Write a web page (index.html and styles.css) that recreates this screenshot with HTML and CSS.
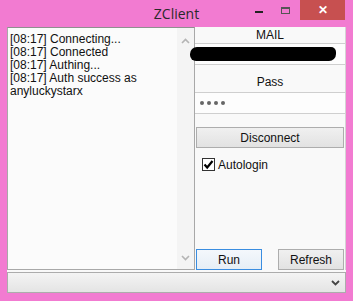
FILE: index.html
```html
<!DOCTYPE html>
<html>
<head>
    <title>ZClient</title>
    <link rel="stylesheet" href="styles.css">
</head>
<body>
    <div class="window">
        <div class="titlebar">
            <span></span>
            <span class="title">ZClient</span>
            <div class="controls">
                <span class="ctl min"><span class="dash"></span></span>
                <span class="ctl max"><span class="square"></span></span>
                <span class="ctl close">&#x2715;</span>
            </div>
        </div>
        <div class="client">
            <div class="main">
                <div class="log">
                    <div class="log-text">
                        [08:17] Connecting...<br>
                        [08:17] Connected<br>
                        [08:17] Authing...<br>
                        [08:17] Auth success as anyluckystarx
                    </div>
                    <div class="scrollbar">
                        <svg width="9" height="6" viewBox="0 0 9 6"><path d="M1 5 L4.5 1.5 L8 5" fill="none" stroke="#b4b4b4" stroke-width="1.6"/></svg>
                        <svg width="9" height="6" viewBox="0 0 9 6"><path d="M1 1 L4.5 4.5 L8 1" fill="none" stroke="#b4b4b4" stroke-width="1.6"/></svg>
                    </div>
                </div>
                <div class="panel">
                    <div class="field-label">MAIL</div>
                    <div class="input"><span class="redact"></span></div>
                    <div class="field-label pass-label">Pass</div>
                    <div class="input pass">
                        <span class="dot"></span><span class="dot"></span><span class="dot"></span><span class="dot"></span>
                    </div>
                    <button class="btn wide">Disconnect</button>
                    <label class="check">
                        <span class="box"><svg width="11" height="11" viewBox="0 0 11 11"><path d="M1.5 5.5 L4.2 8.5 L9.5 2" fill="none" stroke="#000" stroke-width="2.2"/></svg></span>Autologin
                    </label>
                    <div class="actions">
                        <button class="btn run">Run</button>
                        <button class="btn">Refresh</button>
                    </div>
                </div>
            </div>
            <div class="combo">
                <svg width="9" height="6" viewBox="0 0 9 6"><path d="M1 1 L4.5 4.5 L8 1" fill="none" stroke="#444" stroke-width="1.8"/></svg>
            </div>
        </div>
    </div>
</body>
</html>
```

FILE: styles.css
```css
/* Reset */
* {
    margin: 0;
    padding: 0;
    box-sizing: border-box;
}

html, body {
    width: 100%;
    height: 100%;
    overflow: hidden;
    background-color: #f27bd1;
    font-family: 'Liberation Sans', Arial, sans-serif;
    font-size: 12px;
    color: #111;
}

.window {
    width: 353px;
    height: 301px;
    display: flex;
    flex-direction: column;
}

/* Title bar */
.titlebar {
    height: 28px;
    display: grid;
    grid-template-columns: 1fr auto 1fr;
}

.title {
    font-family: 'Open Sans', 'Liberation Sans', sans-serif;
    font-size: 14px;
    color: #2a2a2a;
    padding-top: 4px;
}

.controls {
    display: flex;
    justify-content: flex-end;
    align-items: flex-start;
    padding-right: 8px;
}

.ctl {
    height: 20px;
    display: flex;
    align-items: center;
    justify-content: center;
}

.min {
    width: 26px;
}

.dash {
    width: 8px;
    height: 2px;
    background: #222;
    margin-top: 4px;
}

.max {
    width: 26px;
}

.square {
    width: 9px;
    height: 7px;
    border: 1px solid #555;
    border-top-width: 2px;
}

.close {
    width: 45px;
    margin-left: 2px;
    background: #c75050;
    color: #fff;
    font-size: 12px;
    font-weight: bold;
}

/* Client area */
.client {
    flex: 1;
    margin: 0 7px 8px 7px;
    background: #f9f9f9;
    display: flex;
    flex-direction: column;
}

.main {
    flex: 1;
    display: grid;
    grid-template-columns: 188px 1fr;
}

.log {
    border: 1px solid #a8a8a8;
    border-top-color: #8f8f8f;
    background: #fbfbfb;
    display: flex;
    height: 243px;
}

.log-text {
    flex: 1;
    padding: 5px 2px 0 2px;
    line-height: 13px;
}

.scrollbar {
    width: 17px;
    display: flex;
    flex-direction: column;
    justify-content: space-between;
    align-items: center;
    padding: 10px 0 8px 0;
    background: #f4f4f4;
}

/* Right panel */
.panel {
    display: flex;
    flex-direction: column;
    border-right: 1px solid #d4d4d4;
}

.field-label {
    text-align: center;
    height: 16px;
    padding-top: 1px;
    font-size: 12px;
}

.pass-label {
    height: 27px;
    padding-top: 10px;
}

.input {
    height: 22px;
    border-top: 1px solid #cfcfcf;
    border-bottom: 1px solid #cfcfcf;
    background: #fdfdfd;
    display: flex;
    align-items: center;
}

.redact {
    display: block;
    width: 146px;
    height: 14px;
    margin-left: -5px;
    background: #000;
    border-radius: 7px 5px 7px 6px;
}

.pass {
    padding-left: 5px;
    gap: 3px;
}

.dot {
    width: 4px;
    height: 4px;
    border-radius: 50%;
    background: #666;
}

.btn {
    height: 21px;
    border: 1px solid #adadad;
    background: linear-gradient(#f0f0f0, #e2e2e2);
    font-family: 'Liberation Sans', Arial, sans-serif;
    font-size: 12px;
    color: #111;
}

.wide {
    margin: 13px 1px 0 1px;
}

.check {
    display: flex;
    align-items: center;
    gap: 3px;
    margin: 9px 0 0 7px;
    height: 15px;
}

.box {
    width: 13px;
    height: 13px;
    border: 1px solid #333;
    background: #fff;
    display: flex;
    align-items: center;
    justify-content: center;
}

.actions {
    margin-top: auto;
    display: flex;
    justify-content: space-between;
    padding: 0 1px;
}

.actions .btn {
    width: 66px;
}

.run {
    border-color: #3a8de0;
    background: linear-gradient(#f4f8fc, #e6eef6);
}

/* Bottom combo */
.combo {
    height: 21px;
    margin-top: 2px;
    border: 1px solid #acacac;
    background: linear-gradient(#f4f4f4, #e4e4e4);
    display: flex;
    justify-content: flex-end;
    align-items: center;
    padding-right: 5px;
}
```
